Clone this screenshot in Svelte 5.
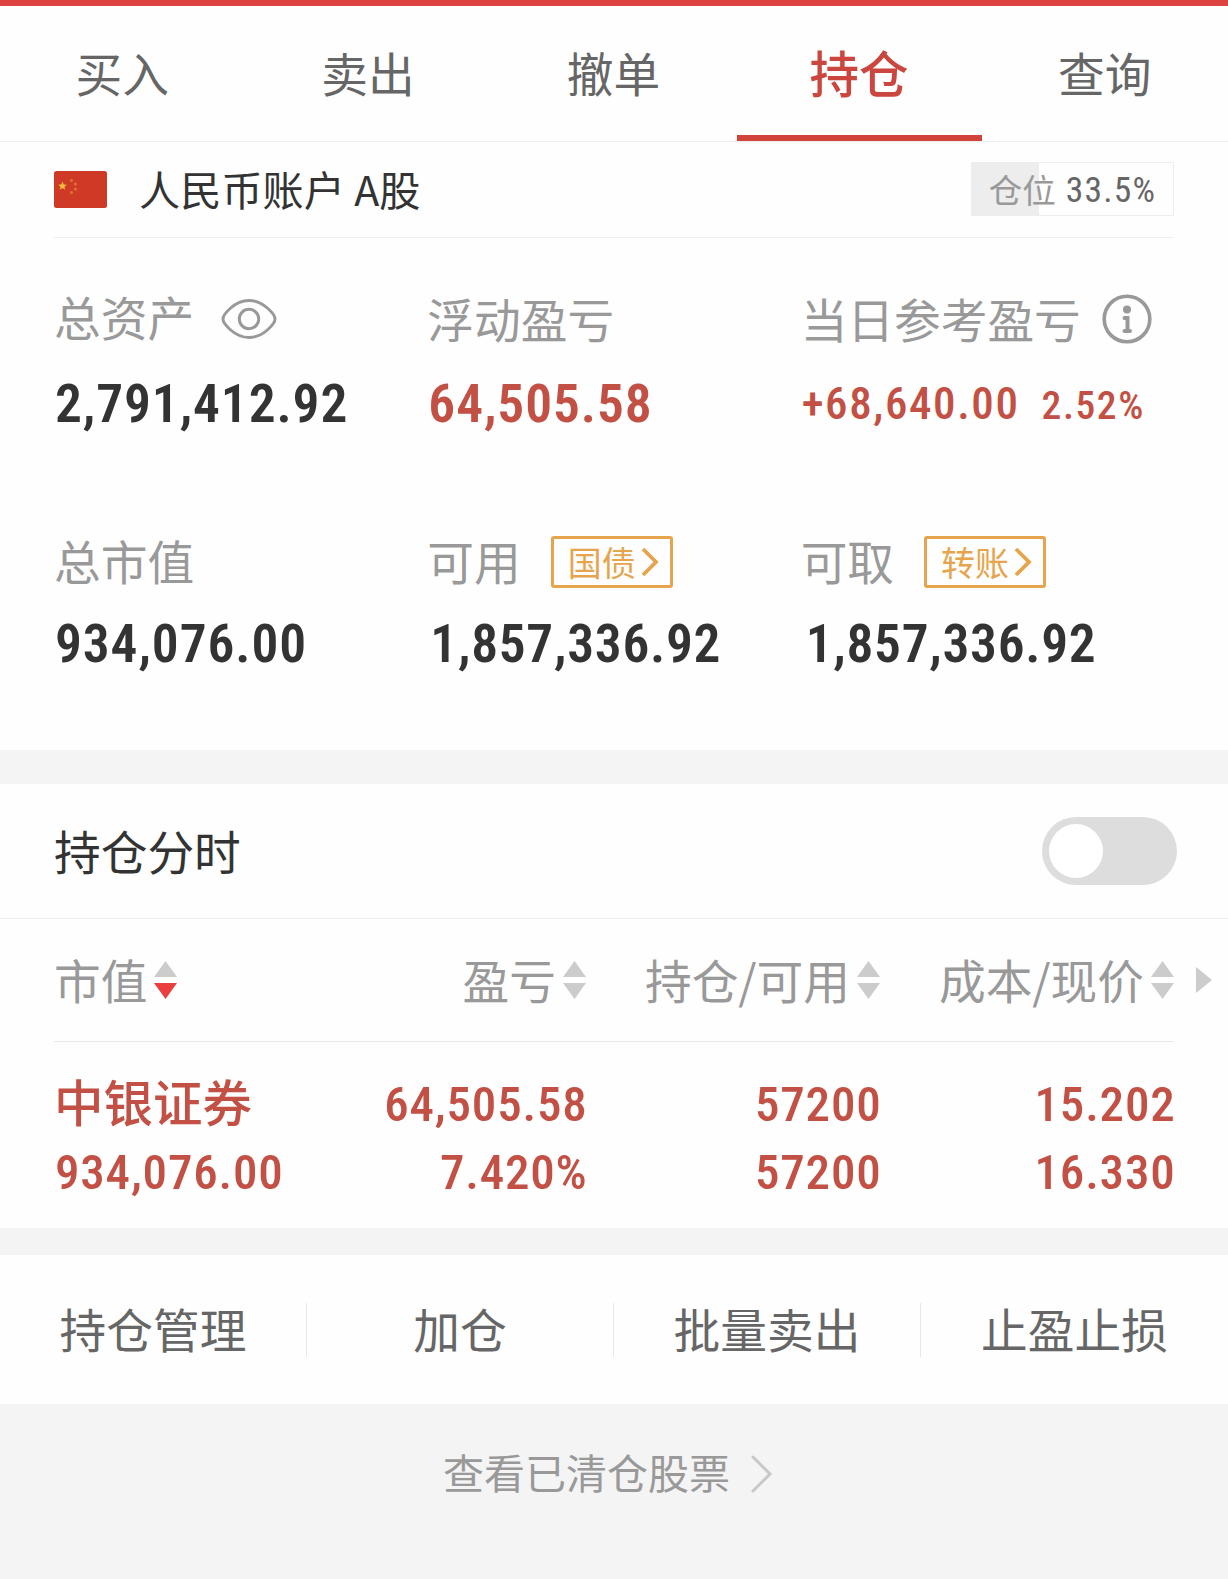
<script lang="ts">
	const tabs = ['买入', '卖出', '撤单', '持仓', '查询'];
	const actions = ['持仓管理', '加仓', '批量卖出', '止盈止损'];
	const columns = [
		{ label: '市值', sort: 'desc' },
		{ label: '盈亏', sort: '' },
		{ label: '持仓/可用', sort: '' },
		{ label: '成本/现价', sort: '' }
	];
	const holdings = [
		{
			name: '中银证券',
			value: '934,076.00',
			profit: '64,505.58',
			percent: '7.420%',
			amount: '57200',
			available: '57200',
			cost: '15.202',
			price: '16.330'
		}
	];
	const position = 33.5;

	let activeTab = $state('持仓');
	let chartOn = $state(false);
</script>

{#snippet linkTag(text: string)}
	<button class="link-tag">
		{text}
		<svg width="18" height="30" viewBox="0 0 18 30">
			<path d="M2 2L15 15L2 28" fill="none" stroke="currentColor" stroke-width="3.8" />
		</svg>
	</button>
{/snippet}

<div class="page">
	<nav class="tabs">
		{#each tabs as tab}
			<button class="tab" class:active={activeTab === tab} onclick={() => (activeTab = tab)}>
				{tab}
			</button>
		{/each}
	</nav>

	<section class="account">
		<div class="account-row">
			<svg class="flag" width="53" height="37" viewBox="0 0 53 37">
				<rect width="53" height="37" rx="2.5" fill="#cf3a27" />
				<path
					d="M8.5 10.5l1.2 3 3.2.2-2.5 2 .8 3.1-2.7-1.7-2.7 1.7.8-3.1-2.5-2 3.2-.2z"
					fill="#f5bd3b"
				/>
				<g fill="#df7233">
					<circle cx="17.5" cy="9.5" r="1.5" />
					<circle cx="21.5" cy="13" r="1.5" />
					<circle cx="21.5" cy="18" r="1.5" />
					<circle cx="17.5" cy="21.5" r="1.5" />
				</g>
			</svg>
			<span class="account-name">人民币账户 A股</span>
			<div class="position">
				<div class="position-fill" style="width: {position}%"></div>
				<span class="position-label">仓位</span>
				<span class="position-value">{position}%</span>
			</div>
		</div>

		<div class="summary">
			<div class="cell">
				<div class="label">
					<span class="raised">总资产</span>
					<svg class="eye" width="56" height="42" viewBox="0 0 56 42">
						<g fill="none" stroke="#999" stroke-width="3">
							<path d="M2 21C2 17 13 2.5 28 2.5S54 17 54 21S43 39.5 28 39.5S2 25 2 21Z" />
							<circle cx="28" cy="21" r="9.7" />
						</g>
					</svg>
				</div>
				<div class="number">2,791,412.92</div>
			</div>
			<div class="cell">
				<div class="label"><span>浮动盈亏</span></div>
				<div class="number red">64,505.58</div>
			</div>
			<div class="cell">
				<div class="label">
					<span>当日参考盈亏</span>
					<svg class="info" width="50" height="50" viewBox="0 0 50 50">
						<circle cx="25" cy="25" r="22.8" fill="none" stroke="#999" stroke-width="3.6" />
						<circle cx="25" cy="15.5" r="4" fill="#999" />
						<path
							d="M22.5 24H25.5V36.5M22.5 37H28"
							fill="none"
							stroke="#999"
							stroke-width="4"
							stroke-linecap="round"
						/>
					</svg>
				</div>
				<div class="number red today">
					<span class="today-value">+68,640.00</span>
					<span class="today-percent">2.52%</span>
				</div>
			</div>
			<div class="cell">
				<div class="label"><span>总市值</span></div>
				<div class="number">934,076.00</div>
			</div>
			<div class="cell">
				<div class="label"><span>可用</span>{@render linkTag('国债')}</div>
				<div class="number available">1,857,336.92</div>
			</div>
			<div class="cell">
				<div class="label"><span>可取</span>{@render linkTag('转账')}</div>
				<div class="number withdrawable">1,857,336.92</div>
			</div>
		</div>
	</section>

	<section class="positions">
		<div class="chart-row">
			<span class="chart-title">持仓分时</span>
			<button
				class="switch"
				class:on={chartOn}
				role="switch"
				aria-checked={chartOn}
				aria-label="持仓分时"
				onclick={() => (chartOn = !chartOn)}
			>
				<span class="knob"></span>
			</button>
		</div>

		<div class="table-head">
			{#each columns as column}
				<div class="column">
					<span>{column.label}</span>
					<svg class="sort" width="23" height="38" viewBox="0 0 23 38">
						<path d="M11.5 0L23 16H0Z" fill="#ccc" />
						<path d="M0 22H23L11.5 38Z" fill={column.sort === 'desc' ? '#ea3f3e' : '#ccc'} />
					</svg>
				</div>
			{/each}
			<svg class="more" width="16" height="26" viewBox="0 0 16 26">
				<path d="M0 0L16 13L0 26Z" fill="#ccc" />
			</svg>
		</div>

		{#each holdings as item}
			<div class="holding">
				<div class="stock">{item.name}</div>
				<div>{item.profit}</div>
				<div>{item.amount}</div>
				<div>{item.cost}</div>
				<div>{item.value}</div>
				<div>{item.percent}</div>
				<div>{item.available}</div>
				<div>{item.price}</div>
			</div>
		{/each}
	</section>

	<div class="actions">
		{#each actions as action}
			<button class="action">{action}</button>
		{/each}
	</div>

	<footer class="cleared">
		<span>查看已清仓股票</span>
		<svg width="22" height="38" viewBox="0 0 22 38">
			<path
				d="M2 2L19 19L2 36"
				fill="none"
				stroke="#c8c8c8"
				stroke-width="3"
				stroke-linecap="round"
			/>
		</svg>
	</footer>
</div>

<style>
	:global(body) {
		margin: 0;
		background: #f4f4f4;
	}

	.page {
		box-sizing: border-box;
		border-top: 6.5px solid #dc4240;
		background: #f4f4f4;
		height: 1579px;
		overflow: hidden;
		color: #333;
		font-size: 46.7px;
		font-family: 'Noto Sans CJK SC', sans-serif;
	}

	button {
		border: 0;
		background: none;
		padding: 0;
		color: inherit;
		font: inherit;
		cursor: pointer;
	}

	svg {
		display: block;
		flex: none;
	}

	.tabs {
		display: grid;
		grid-template-columns: repeat(5, 1fr);
		border-bottom: 1px solid #eee;
		background: #fefefe;
		height: 135px;
	}

	.tab {
		box-sizing: border-box;
		border-bottom: 6px solid transparent;
		padding: 2px 1px 0 0;
		color: #666;
		line-height: 125px;
	}

	.tab.active {
		border-color: #d1423b;
		color: #cb463e;
		font-weight: 500;
		font-size: 49.5px;
	}

	.account {
		background: #fefefe;
		padding: 0 54px;
		height: 608px;
	}

	.account-row {
		display: flex;
		align-items: center;
		border-bottom: 1px solid #eee;
		height: 95px;
	}

	.account-name {
		flex: 1;
		margin-left: 32px;
		padding-bottom: 4px;
		font-size: 41.2px;
		line-height: 60px;
	}

	.position {
		display: flex;
		position: relative;
		justify-content: center;
		align-items: center;
		box-sizing: border-box;
		margin-bottom: 1px;
		border: 1px solid #ededed;
		width: 203px;
		height: 54px;
		white-space: nowrap;
	}

	.position-fill {
		position: absolute;
		top: 0;
		bottom: 0;
		left: 0;
		background: #ededed;
	}

	.position-label {
		position: relative;
		color: #999;
		font-size: 33.5px;
		line-height: 48px;
	}

	.position-value {
		position: relative;
		margin-left: 10px;
		padding-top: 1px;
		color: #666;
		font-size: 35.5px;
		font-stretch: 75%;
		font-family: Roboto, sans-serif;
		letter-spacing: 1.2px;
	}

	.summary {
		display: grid;
		grid-template-rows: 240px 240px;
		grid-template-columns: repeat(3, 1fr);
		padding-top: 46px;
	}

	.label {
		display: flex;
		align-items: center;
		height: 70px;
		color: #999;
		line-height: 66px;
		white-space: nowrap;
	}

	.label span {
		padding-bottom: 3px;
	}

	.label .raised {
		padding-bottom: 7px;
	}

	.cell:nth-child(n + 4) .label {
		padding-top: 5px;
		height: 65px;
	}

	.eye {
		margin-left: 27px;
	}

	.info {
		margin-left: 21px;
	}

	.number {
		padding-left: 1px;
		height: 100px;
		font-weight: 600;
		font-size: 53.5px;
		font-stretch: 75%;
		line-height: 100px;
		font-family: Roboto, sans-serif;
		letter-spacing: 0.9px;
		white-space: nowrap;
	}

	.available {
		padding-left: 3px;
		letter-spacing: 0.7px;
	}

	.withdrawable {
		padding-left: 5px;
		letter-spacing: 0.7px;
	}

	.red {
		color: #c25044;
	}

	.today {
		display: flex;
		align-items: baseline;
		letter-spacing: 1.6px;
	}

	.today-value {
		font-weight: 500;
		font-size: 45px;
	}

	.today-percent {
		margin-left: 22px;
		font-weight: 500;
		font-size: 39.5px;
	}

	.link-tag {
		display: flex;
		align-items: center;
		gap: 5px;
		box-sizing: border-box;
		margin-left: 30px;
		border: 3.5px solid #e6a54c;
		border-radius: 3px;
		padding-left: 14px;
		width: 122px;
		height: 52px;
		color: #e6a54c;
		font-size: 34px;
		line-height: 42px;
	}

	.positions {
		margin-top: 34px;
		background: #fefefe;
		height: 444px;
	}

	.chart-row {
		display: flex;
		justify-content: space-between;
		align-items: center;
		border-bottom: 1px solid #eee;
		padding: 0 51px 0 54px;
		height: 134px;
	}

	.chart-title {
		padding-bottom: 3px;
	}

	.switch {
		border-radius: 34px;
		background: #ddd;
		padding: 7px;
		width: 135px;
		height: 68px;
	}

	.switch.on {
		background: #dc4240;
	}

	.knob {
		display: block;
		border-radius: 50%;
		background: #fff;
		width: 54px;
		height: 54px;
	}

	.switch.on .knob {
		margin-left: auto;
	}

	.table-head,
	.holding {
		display: grid;
		grid-template-columns: 266px 266px 294px 294px;
		margin: 0 0 0 54px;
	}

	.table-head {
		grid-template-columns: 266px 266px 294px 294px 54px;
		align-items: center;
		height: 122px;
		color: #999;
		line-height: 70px;
	}

	.column {
		display: flex;
		justify-content: flex-end;
		align-items: center;
		white-space: nowrap;
	}

	.column:first-child {
		justify-content: flex-start;
	}

	.column span {
		padding-bottom: 3px;
	}

	.sort {
		margin-left: 7px;
	}

	.more {
		margin-left: 22px;
	}

	.holding {
		grid-template-rows: 68px 68px;
		margin-right: 54px;
		border-top: 1px solid #e8e8e8;
		padding-top: 28px;
		color: #c25044;
		font-weight: 500;
		font-size: 49px;
		font-stretch: 75%;
		line-height: 70px;
		font-family: Roboto, sans-serif;
		letter-spacing: 0.8px;
		text-align: right;
		white-space: nowrap;
	}

	/* pull the trailing letter space past the column edge */
	.holding div {
		margin-right: -1.5px;
	}

	.holding div:nth-child(4n + 1) {
		padding-left: 1px;
		text-align: left;
	}

	.holding div.stock:first-child {
		padding-left: 0;
		font-size: 49.5px;
		line-height: 61px;
		font-family: 'Noto Sans CJK SC', sans-serif;
		letter-spacing: 0;
	}

	.actions {
		display: grid;
		grid-template-columns: repeat(4, 1fr);
		align-items: center;
		margin-top: 27px;
		background: #fefefe;
		height: 149px;
	}

	.action {
		box-sizing: border-box;
		border-right: 1px solid #e8e8e8;
		padding-bottom: 3px;
		height: 54px;
		color: #666;
		line-height: 50px;
	}

	.action:last-child {
		border-right: 0;
	}

	.cleared {
		display: flex;
		justify-content: center;
		align-items: center;
		padding-right: 12px;
		height: 139px;
		color: #999;
		font-size: 41px;
		line-height: 54px;
	}

	.cleared span {
		padding-bottom: 5px;
	}

	.cleared svg {
		margin-left: 21px;
	}
</style>
